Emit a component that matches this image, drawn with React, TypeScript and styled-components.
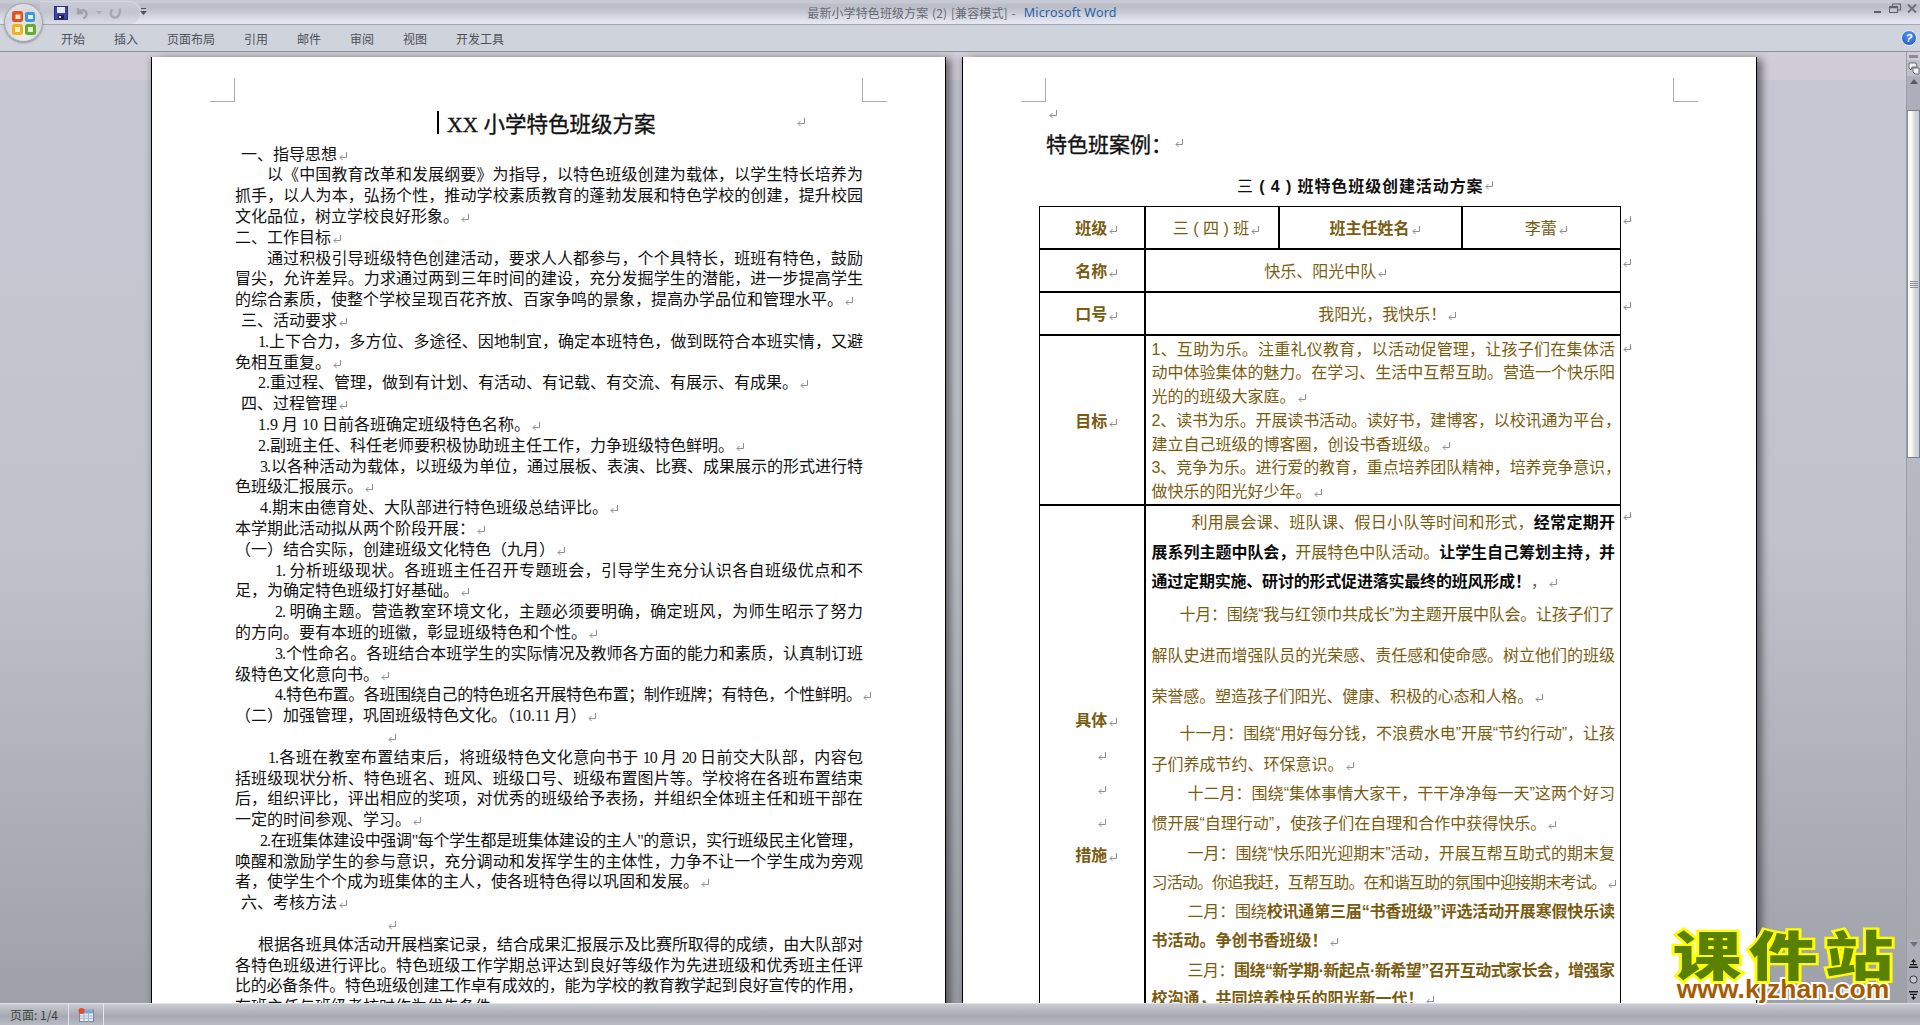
import React from 'react';
import styled, { createGlobalStyle } from 'styled-components';

const GlobalStyle = createGlobalStyle`
  html, body {
    margin: 0;
    padding: 0;
    height: 100%;
    overflow: hidden;
    background: #c5c8d2;
  }
  #root {
    height: 100%;
  }
`;

const Window = styled.div`
  position: relative;
  display: flex;
  flex-direction: column;
  width: 1920px;
  height: 1025px;
  overflow: hidden;
  font-family: "Noto Sans CJK SC", sans-serif;
`;

/* ---------- title bar + ribbon ---------- */

const TitleBar = styled.div`
  position: relative;
  display: flex;
  align-items: center;
  justify-content: center;
  flex: none;
  height: 24px;
  padding-left: 4px;
  border-bottom: 1px solid #a5a7af;
  background: linear-gradient(#c7cad4 0, #c7cad4 3px, #bcbfca 4px, #bcbfca 8px, #c6c9d3 12px, #d3d6e0 16px, #e3e6f0 22px);
`;

const DocName = styled.span`
  font-size: 12px;
  letter-spacing: 0.1px;
  word-spacing: 1px;
  color: #656971;
`;

const AppName = styled.span`
  margin-left: 8px;
  font-family: "Noto Sans", sans-serif;
  font-size: 12.5px;
  letter-spacing: 0.2px;
  color: #2a62a8;
`;

const QuickAccess = styled.div`
  position: absolute;
  left: 40px;
  top: 1px;
  display: flex;
  align-items: center;
  gap: 7px;
  width: 86px;
  height: 21px;
  padding-left: 14px;
  border: 1px solid #d6d9e2;
  border-left: none;
  border-radius: 0 12px 12px 0;
  background: linear-gradient(#c8cbd5, #c2c5cf 50%, #d8dbe5);
`;

const QuickMenu = styled.div`
  position: absolute;
  left: 140px;
  top: 8px;
  display: flex;
`;

const WindowButtons = styled.div`
  position: absolute;
  right: 2px;
  top: 3px;
  display: flex;
  align-items: center;
  gap: 5px;
`;

const OfficeButton = styled.div`
  position: absolute;
  left: 4px;
  top: 3px;
  z-index: 2;
  display: flex;
  align-items: center;
  justify-content: center;
  width: 37px;
  height: 37px;
  border: 1px solid #a3a6ad;
  border-radius: 50%;
  background: radial-gradient(circle at 50% 75%, #f4f5f8 0, #d3d5dc 55%, #e8e9ee 100%);
  box-shadow: 0 1px 2px rgba(60, 60, 70, 0.5);
`;

const TabBar = styled.div`
  position: relative;
  display: flex;
  align-items: center;
  flex: none;
  height: 26px;
  padding-left: 61px;
  gap: 29px;
  border-bottom: 1px solid #8e9096;
  background: #cfd3dc;
`;

const Tab = styled.span`
  font-size: 12px;
  color: #4c5058;
`;

const HelpButton = styled.div`
  position: absolute;
  right: 3px;
  top: 5px;
  display: flex;
  align-items: center;
  justify-content: center;
  width: 14px;
  height: 14px;
  border-radius: 50%;
  border: 1px solid #e8eefc;
  background: radial-gradient(circle at 50% 30%, #5c97ef, #1a50bb);
  color: #fff;
  font-family: "Liberation Sans", sans-serif;
  font-size: 11px;
  font-weight: 700;
  font-style: italic;
  line-height: 14px;
`;

/* ---------- document area ---------- */

const Workspace = styled.div`
  display: flex;
  flex: 1;
  min-height: 0;
`;

const Canvas = styled.div`
  flex: 1;
  display: flex;
  gap: 16px;
  padding: 5px 0 0 151px;
  overflow: hidden;
  background: linear-gradient(#d0cdd8 0, #d0cdd8 28px, #c5c8d2 28px, #c1c4cd 50%, #9ea1a8 100%);
`;

const Page = styled.div`
  position: relative;
  flex: none;
  box-sizing: border-box;
  width: 795px;
  height: 1400px;
  padding: 50px 83px 0;
  background: #fff;
  border-left: 1px solid #000;
  border-right: 1px solid #000;
  box-shadow: 7px 0 8px -2px rgba(50, 50, 55, 0.65), -3px 0 5px -1px rgba(70, 70, 80, 0.25);
`;

const CropMark = styled.div<{ $side: 'left' | 'right' }>`
  position: absolute;
  top: 21px;
  ${(p) => (p.$side === 'left' ? 'left: 58px; border-right: 1px solid #adadb5;' : 'right: 58px; border-left: 1px solid #adadb5;')}
  width: 24px;
  height: 23px;
  border-bottom: 1px solid #adadb5;
`;

const SerifText = styled.div`
  font-family: "Liberation Serif", "Noto Sans CJK SC", serif;
  font-size: 16px;
  color: #111;
`;

const HeadText = styled(SerifText)`
  margin-top: -4px;
`;

const DocTitle = styled.div`
  display: flex;
  align-items: center;
  height: 30px;
  margin-bottom: 7.6px;
  padding-left: 202px;
  font-size: 21.5px;
  -webkit-text-stroke: 0.35px #111;
  color: #111;
`;

const Caret = styled.span`
  flex: none;
  width: 2px;
  height: 23px;
  margin-right: 8px;
  background: #000;
`;

const DocTitleMark = styled.span`
  margin-left: 140px;
  display: flex;
`;

const Line = styled.div<{ $indent?: number; $full?: boolean; $ls?: number }>`
  height: 20.8px;
  line-height: 20.8px;
  padding-left: ${(p) => p.$indent ?? 0}px;
  white-space: nowrap;
  letter-spacing: ${(p) => (p.$ls !== undefined ? p.$ls : p.$full ? -1 : 0)}px;
  text-align: ${(p) => (p.$full ? 'justify' : 'left')};
  text-align-last: ${(p) => (p.$full ? 'justify' : 'left')};
`;

const MarkIcon = styled.svg`
  display: inline-block;
  width: 10px;
  height: 10px;
  margin-left: 1px;
  vertical-align: -1px;
`;

const Mark = () => (
  <MarkIcon viewBox="0 0 10 10" fill="none" stroke="#8f8f8f" strokeWidth="1">
    <path d="M8.5 1v5.5H2M4.5 4 2 6.5 4.5 9" />
  </MarkIcon>
);

/* ---------- right page ---------- */

const MarkLine = styled.div`
  height: 20px;
  line-height: 20px;
  padding-left: 1px;
`;

const CaseTitle = styled.div`
  display: flex;
  align-items: center;
  gap: 1px;
  height: 40px;
  font-size: 21px;
  -webkit-text-stroke: 0.35px #111;
  color: #111;
`;

const PlanTitle = styled.div`
  display: flex;
  align-items: center;
  height: 43px;
  padding-left: 191px;
  font-family: "Liberation Sans", "Noto Sans CJK SC", sans-serif;
  font-size: 16px;
  letter-spacing: 0.9px;
  white-space: pre;
  color: #111;
`;

const Plan = styled.table`
  width: 581px;
  margin-left: -7px;
  border-collapse: collapse;
  table-layout: fixed;
  font-family: "Liberation Sans", "Noto Sans CJK SC", sans-serif;
  font-size: 16px;
  color: #7a5c10;
`;

const Cell = styled.td<{ $pr?: number }>`
  position: relative;
  box-sizing: border-box;
  padding: 0 ${(p) => p.$pr ?? 0}px 0 10px;
  border: 2px solid #000;
  text-align: center;
  vertical-align: middle;
  &:first-child {
    border-left-width: 1px;
  }
  &:last-child {
    border-right-width: 1px;
  }
`;

const StackCell = styled(Cell)`
  vertical-align: top;
`;

const PlanRow = styled.tr<{ $h: number }>`
  height: ${(p) => p.$h}px;
  &:first-child td {
    border-top-width: 1px;
  }
`;

const Strong = styled.b`
  font-weight: 700;
`;

const RowMark = styled.span<{ $top: number }>`
  position: absolute;
  right: -12px;
  top: ${(p) => p.$top}px;
  display: flex;
`;

const TextCell = styled(Cell)`
  padding: 2px 6px 0 6px;
  text-align: left;
  vertical-align: top;
`;

const HeadStack = styled.div`
  display: flex;
  flex-direction: column;
  align-items: center;
  gap: 13px;
  padding-top: 205px;
  height: 900px;
`;

const StackLine = styled.div`
  height: 20.8px;
  line-height: 20.8px;
`;

const StackMark = styled(StackLine)`
  padding-left: 10px;
`;

const TableLine = styled.div<{ $indent?: number; $full?: boolean; $h: number; $ls?: number; $hang?: boolean }>`
  height: ${(p) => p.$h}px;
  line-height: ${(p) => p.$h}px;
  padding-left: ${(p) => p.$indent ?? 0}px;
  margin-right: ${(p) => (p.$hang ? -6 : 0)}px;
  white-space: nowrap;
  letter-spacing: ${(p) => (p.$ls !== undefined ? p.$ls : p.$full ? -1 : 0)}px;
  text-align: ${(p) => (p.$full ? 'justify' : 'left')};
  text-align-last: ${(p) => (p.$full ? 'justify' : 'left')};
`;

const BlackBold = styled.b`
  font-weight: 700;
  color: #0a0a0a;
`;

/* ---------- scrollbar ---------- */

const ScrollBar = styled.div`
  flex: none;
  display: flex;
  flex-direction: column;
  align-items: stretch;
  width: 14px;
  background: linear-gradient(#c5c8d2, #a4a7ae);
  border-left: 1px solid #9b9ea6;
  box-sizing: border-box;
`;

const SplitBox = styled.div`
  flex: none;
  height: 8px;
  display: flex;
  align-items: center;
  justify-content: center;
  background: #d0cdd8;
  &::after {
    content: '';
    width: 9px;
    height: 3px;
    background: #8a8c92;
  }
`;

const RulerBox = styled.div`
  flex: none;
  height: 16px;
  display: flex;
  align-items: center;
  justify-content: center;
  background: #bcc0ca;
`;

const ArrowBox = styled.div<{ $h: number }>`
  flex: none;
  height: ${(p) => p.$h}px;
  display: flex;
  justify-content: center;
  align-items: flex-start;
  padding-top: 3px;
  box-sizing: border-box;
  background: #acafb9;
`;

const Arrow = styled.div<{ $dir: 'up' | 'down' }>`
  width: 0;
  height: 0;
  border-left: 4px solid transparent;
  border-right: 4px solid transparent;
  ${(p) => (p.$dir === 'up' ? 'border-bottom: 5px solid #555b6b;' : 'border-top: 5px solid #6b7080;')}
`;

const Thumb = styled.div`
  flex: none;
  height: 348px;
  display: flex;
  flex-direction: column;
  align-items: center;
  justify-content: center;
  gap: 1px;
  box-sizing: border-box;
  border: 1px solid #7c7f88;
  border-left: 1px solid #8a8d95;
  background: linear-gradient(90deg, #fbfaf3 0, #fdfbf2 30%, #d6d8e0 60%, #c9ccd6 100%);
`;

const Grip = styled.span`
  width: 8px;
  height: 1px;
  background: #8b8e96;
`;

const TrackFill = styled.div`
  flex: 1;
`;

const BrowseBox = styled.div`
  flex: none;
  height: 16px;
  display: flex;
  align-items: center;
  justify-content: center;
  background: #abaeb6;
`;

/* ---------- status bar ---------- */

const StatusBar = styled.div`
  flex: none;
  display: flex;
  align-items: stretch;
  box-sizing: border-box;
  height: 22px;
  border-top: 1px solid #dfe1e6;
  background: linear-gradient(#c9cbd2 0, #b0b3bb 40%, #a6a9b1 60%, #b8bbc3 100%);
  position: relative;
  z-index: 1;
`;

const StatusItem = styled.div<{ $w: number }>`
  display: flex;
  align-items: center;
  justify-content: center;
  width: ${(p) => p.$w}px;
  border-right: 1px solid #e4e5ea;
  font-size: 12px;
  color: #3f4248;
`;

/* ---------- watermark logo ---------- */

const Watermark = styled.div`
  position: absolute;
  right: 21px;
  bottom: 24px;
  z-index: 3;
  display: flex;
  flex-direction: column;
  align-items: center;
  width: 232px;
`;

const WatermarkCn = styled.div`
  font-family: "Noto Sans CJK SC", sans-serif;
  font-size: 69px;
  font-weight: 900;
  line-height: 56px;
  height: 52px;
  letter-spacing: 7px;
  margin-right: -7px;
  color: #5a8000;
  -webkit-text-stroke: 6px #ffff00;
  paint-order: stroke fill;
  transform: scaleY(0.78);
  white-space: nowrap;
`;

const WatermarkUrl = styled.div`
  font-family: "Liberation Sans", sans-serif;
  font-size: 26.5px;
  font-weight: 700;
  line-height: 24px;
  color: #a85a00;
  -webkit-text-stroke: 4px #fff;
  paint-order: stroke fill;
`;

/* ---------- drawings ---------- */

const OfficeLogo = () => (
  <svg width="28" height="28" viewBox="0 0 28 28">
    <rect x="2" y="2" width="11" height="11" rx="2.5" fill="#e0531c" />
    <rect x="5.5" y="5.5" width="5" height="4.5" fill="#f8e9c8" />
    <rect x="15" y="3" width="10" height="10" rx="2" fill="#3f97d9" />
    <rect x="18" y="6" width="5" height="4" fill="#e6f2fb" />
    <rect x="2" y="15" width="11" height="11" rx="2.5" fill="#f2b01e" />
    <rect x="5" y="18" width="5" height="5" fill="#fdf3c4" />
    <rect x="15" y="15" width="11" height="11" rx="2.5" fill="#63ad2e" />
    <rect x="18" y="18" width="5" height="5" fill="#e8f5d5" />
    <circle cx="14" cy="14" r="2" fill="#dfe4ea" />
  </svg>
);

const SaveIcon = () => (
  <svg width="14" height="14" viewBox="0 0 14 14">
    <rect x="0.5" y="0.5" width="13" height="13" fill="#3b45a8" stroke="#2a2f70" />
    <rect x="3" y="1" width="8" height="6" fill="#e8e9f4" />
    <rect x="4" y="9" width="6" height="4" fill="#20233a" />
    <rect x="5" y="10" width="2" height="2" fill="#d7d9e0" />
  </svg>
);

const UndoIcon = () => (
  <svg width="14" height="14" viewBox="0 0 14 14" fill="none" stroke="#a0a3ad" strokeWidth="2.4">
    <path d="M3 2v5h5M3.5 6.5C6 3 11 3.5 11.5 7.5c.3 2.5-1.5 4-3 5" />
  </svg>
);

const RedoIcon = () => (
  <svg width="13" height="14" viewBox="0 0 13 14" fill="none" stroke="#a5a8b2" strokeWidth="2.4">
    <path d="M11 2.5v4.5M3.5 3.5C.8 5.5 1 11 5.5 11.5c3 .2 5-1.5 5-5" />
  </svg>
);

const SmallArrowDown = () => (
  <svg width="6" height="4" viewBox="0 0 6 4">
    <path d="M0 0h6L3 3.5z" fill="#a9acb6" />
  </svg>
);

const MenuArrow = () => (
  <svg width="7" height="7" viewBox="0 0 7 7">
    <path d="M1 0h5v1H1zM0 3h7L3.5 7z" fill="#4e525c" />
  </svg>
);

const MinimizeIcon = () => (
  <svg width="12" height="12" viewBox="0 0 12 12">
    <rect x="2" y="8" width="7" height="2" fill="#5d6068" />
  </svg>
);

const RestoreIcon = () => (
  <svg width="12" height="12" viewBox="0 0 12 12" fill="none" stroke="#5d6068">
    <rect x="3.5" y="1" width="8" height="6" />
    <rect x="0.5" y="3.5" width="8" height="6" fill="#c4c7d1" />
    <path d="M0.5 4.5h8" strokeWidth="1.5" />
  </svg>
);

const CloseIcon = () => (
  <svg width="12" height="12" viewBox="0 0 12 12" stroke="#6c7079" strokeWidth="2">
    <path d="M2 1.5l8 8M10 1.5l-8 8" />
  </svg>
);

const RulerIcon = () => (
  <svg width="12" height="13" viewBox="0 0 12 13" fill="#f2f3f6" stroke="#50535c" strokeWidth="0.8">
    <path d="M1 1h7l1 4h-5l-1 3-2-2z" />
    <path d="M5 6h6v6H7l-2-2z" />
  </svg>
);

const BrowseUp = () => (
  <svg width="9" height="9" viewBox="0 0 9 9" fill="#1a1a1a">
    <path d="M4.5 0 7 3H2zM4 3h1v2H4zM1 5h7v1.2H1zM0 7.5h9V9H0z" />
  </svg>
);

const BrowseDot = () => (
  <svg width="9" height="9" viewBox="0 0 9 9">
    <circle cx="4.5" cy="4.5" r="3.6" fill="#c6c8ce" stroke="#2b2b2e" strokeWidth="0.9" />
  </svg>
);

const BrowseDown = () => (
  <svg width="9" height="9" viewBox="0 0 9 9" fill="#1a1a1a">
    <path d="M0 0h9v1.5H0zM1 2.8h7V4H1zM4 4h1v2H4zM4.5 9 2 6h5z" />
  </svg>
);

const MacroIcon = () => (
  <svg width="16" height="14" viewBox="0 0 16 14">
    <rect x="1.5" y="2" width="14" height="11.5" fill="#e8ecf5" stroke="#7d8aa3" />
    <rect x="2" y="2.5" width="13" height="3" fill="#7da2d6" />
    <path d="M2 8h13M2 10.5h13M6 5.5v8M10.5 5.5v8" stroke="#a9b4c8" />
    <circle cx="3.5" cy="3" r="3" fill="#e8482e" />
  </svg>
);

/* ---------- content ---------- */

type Row = { t: string; i?: number; f?: boolean; m?: boolean; ls?: number; hang?: boolean };

const leftRows: Row[] = [
  { t: '一、指导思想', i: 6, m: true },
  { t: '以《中国教育改革和发展纲要》为指导，以特色班级创建为载体，以学生特长培养为', i: 32, f: true },
  { t: '抓手，以人为本，弘扬个性，推动学校素质教育的蓬勃发展和特色学校的创建，提升校园', f: true },
  { t: '文化品位，树立学校良好形象。', m: true },
  { t: '二、工作目标', m: true },
  { t: '通过积极引导班级特色创建活动，要求人人都参与，个个具特长，班班有特色，鼓励', i: 32, f: true },
  { t: '冒尖，允许差异。力求通过两到三年时间的建设，充分发掘学生的潜能，进一步提高学生', f: true },
  { t: '的综合素质，使整个学校呈现百花齐放、百家争鸣的景象，提高办学品位和管理水平。', m: true },
  { t: '三、活动要求', i: 6, m: true },
  { t: '1.上下合力，多方位、多途径、因地制宜，确定本班特色，做到既符合本班实情，又避', i: 23, f: true },
  { t: '免相互重复。', m: true },
  { t: '2.重过程、管理，做到有计划、有活动、有记载、有交流、有展示、有成果。', i: 23, m: true },
  { t: '四、过程管理', i: 6, m: true },
  { t: '1.9 月 10 日前各班确定班级特色名称。', i: 23, m: true },
  { t: '2.副班主任、科任老师要积极协助班主任工作，力争班级特色鲜明。', i: 23, m: true },
  { t: '3.以各种活动为载体，以班级为单位，通过展板、表演、比赛、成果展示的形式进行特', i: 25, f: true },
  { t: '色班级汇报展示。', m: true },
  { t: '4.期末由德育处、大队部进行特色班级总结评比。', i: 25, m: true },
  { t: '本学期此活动拟从两个阶段开展：', m: true },
  { t: '（一）结合实际，创建班级文化特色（九月）', m: true },
  { t: '1. 分析班级现状。各班班主任召开专题班会，引导学生充分认识各自班级优点和不', i: 40, f: true },
  { t: '足，为确定特色班级打好基础。', m: true },
  { t: '2. 明确主题。营造教室环境文化，主题必须要明确，确定班风，为师生昭示了努力', i: 40, f: true },
  { t: '的方向。要有本班的班徽，彰显班级特色和个性。', m: true },
  { t: '3.个性命名。各班结合本班学生的实际情况及教师各方面的能力和素质，认真制订班', i: 40, f: true },
  { t: '级特色文化意向书。', m: true },
  { t: '4.特色布置。各班围绕自己的特色班名开展特色布置；制作班牌；有特色，个性鲜明。', i: 40, m: true, ls: -0.45 },
  { t: '（二）加强管理，巩固班级特色文化。（10.11 月）', m: true },
  { t: '', i: 151, m: true },
  { t: '1.各班在教室布置结束后，将班级特色文化意向书于 10 月 20 日前交大队部，内容包', i: 33, f: true },
  { t: '括班级现状分析、特色班名、班风、班级口号、班级布置图片等。学校将在各班布置结束', f: true },
  { t: '后，组织评比，评出相应的奖项，对优秀的班级给予表扬，并组织全体班主任和班干部在', f: true },
  { t: '一定的时间参观、学习。', m: true },
  { t: '2.在班集体建设中强调"每个学生都是班集体建设的主人"的意识，实行班级民主化管理，', i: 25, f: true },
  { t: '唤醒和激励学生的参与意识，充分调动和发挥学生的主体性，力争不让一个学生成为旁观', f: true },
  { t: '者，使学生个个成为班集体的主人，使各班特色得以巩固和发展。', m: true },
  { t: '六、考核方法', i: 6, m: true },
  { t: '', i: 151, m: true },
  { t: '根据各班具体活动开展档案记录，结合成果汇报展示及比赛所取得的成绩，由大队部对', i: 23, f: true },
  { t: '各特色班级进行评比。特色班级工作学期总评达到良好等级作为先进班级和优秀班主任评', f: true },
  { t: '比的必备条件。特色班级创建工作卓有成效的，能为学校的教育教学起到良好宣传的作用，', f: true },
  { t: '在班主任与班级考核时作为优先条件。' },
];

const goalRows: Row[] = [
  { t: '1、互助为乐。注重礼仪教育，以活动促管理，让孩子们在集体活', f: true },
  { t: '动中体验集体的魅力。在学习、生活中互帮互助。营造一个快乐阳', f: true },
  { t: '光的的班级大家庭。', m: true },
  { t: '2、读书为乐。开展读书活动。读好书，建博客，以校讯通为平台，', f: true, hang: true },
  { t: '建立自己班级的博客圈，创设书香班级。', m: true },
  { t: '3、竞争为乐。进行爱的教育，重点培养团队精神，培养竞争意识，', f: true, hang: true },
  { t: '做快乐的阳光好少年。', m: true },
];

const tabs = ['开始', '插入', '页面布局', '引用', '邮件', '审阅', '视图', '开发工具'];

export default function App() {
  return (
    <Window lang="zh-CN">
      <GlobalStyle />

      <OfficeButton>
        <OfficeLogo />
      </OfficeButton>

      <TitleBar>
        <QuickAccess>
          <SaveIcon />
          <UndoIcon />
          <SmallArrowDown />
          <RedoIcon />
        </QuickAccess>
        <QuickMenu>
          <MenuArrow />
        </QuickMenu>
        <DocName>最新小学特色班级方案 (2) [兼容模式] -</DocName>
        <AppName>Microsoft Word</AppName>
        <WindowButtons>
          <MinimizeIcon />
          <RestoreIcon />
          <CloseIcon />
        </WindowButtons>
      </TitleBar>

      <TabBar>
        {tabs.map((tab) => (
          <Tab key={tab}>{tab}</Tab>
        ))}
        <HelpButton>?</HelpButton>
      </TabBar>

      <Workspace>
        <Canvas>
          <Page>
            <CropMark $side="left" />
            <CropMark $side="right" />
            <SerifText>
              <DocTitle>
                <Caret />
                XX 小学特色班级方案
                <DocTitleMark>
                  <Mark />
                </DocTitleMark>
              </DocTitle>
              {leftRows.map((row, i) => (
                <Line key={i} $indent={row.i} $full={row.f} $ls={row.ls}>
                  {row.t}
                  {row.m && <Mark />}
                </Line>
              ))}
            </SerifText>
          </Page>

          <Page>
            <CropMark $side="left" />
            <CropMark $side="right" />
            <HeadText>
              <MarkLine>
                <Mark />
              </MarkLine>
              <CaseTitle>
                特色班案例：
                <Mark />
              </CaseTitle>
              <PlanTitle>
                三<Strong> ( 4 ) 班特色班级创建活动方案</Strong>
                <Mark />
              </PlanTitle>
            </HeadText>

            <Plan>
              <colgroup>
                <col style={{ width: 105 }} />
                <col style={{ width: 134 }} />
                <col style={{ width: 183 }} />
                <col style={{ width: 159 }} />
              </colgroup>
              <tbody>
                <PlanRow $h={42}>
                  <Cell>
                    <Strong>班级</Strong>
                    <Mark />
                  </Cell>
                  <Cell>
                    三 ( 四 ) 班
                    <Mark />
                  </Cell>
                  <Cell>
                    <Strong>班主任姓名</Strong>
                    <Mark />
                  </Cell>
                  <Cell>
                    李蕾
                    <Mark />
                    <RowMark $top={8}>
                      <Mark />
                    </RowMark>
                  </Cell>
                </PlanRow>
                <PlanRow $h={43}>
                  <Cell>
                    <Strong>名称</Strong>
                    <Mark />
                  </Cell>
                  <Cell colSpan={3} $pr={124}>
                    快乐、阳光中队
                    <Mark />
                    <RowMark $top={8}>
                      <Mark />
                    </RowMark>
                  </Cell>
                </PlanRow>
                <PlanRow $h={43}>
                  <Cell>
                    <Strong>口号</Strong>
                    <Mark />
                  </Cell>
                  <Cell colSpan={3}>
                    我阳光，我快乐！
                    <Mark />
                    <RowMark $top={8}>
                      <Mark />
                    </RowMark>
                  </Cell>
                </PlanRow>
                <PlanRow $h={169}>
                  <Cell>
                    <Strong>目标</Strong>
                    <Mark />
                  </Cell>
                  <TextCell colSpan={3}>
                    {goalRows.map((row, i) => (
                      <TableLine key={i} $h={23.8} $full={row.f} $hang={row.hang}>
                        {row.t}
                        {row.m && <Mark />}
                      </TableLine>
                    ))}
                    <RowMark $top={7}>
                      <Mark />
                    </RowMark>
                  </TextCell>
                </PlanRow>
                <PlanRow $h={900}>
                  <StackCell>
                    <HeadStack>
                      <StackLine>
                        <Strong>具体</Strong>
                        <Mark />
                      </StackLine>
                      <StackMark>
                        <Mark />
                      </StackMark>
                      <StackMark>
                        <Mark />
                      </StackMark>
                      <StackMark>
                        <Mark />
                      </StackMark>
                      <StackLine>
                        <Strong>措施</Strong>
                        <Mark />
                      </StackLine>
                    </HeadStack>
                  </StackCell>
                  <TextCell colSpan={3}>
                    <TableLine $h={30} $indent={40} $full>
                      利用晨会课、班队课、假日小队等时间和形式，
                      <BlackBold>经常定期开</BlackBold>
                    </TableLine>
                    <TableLine $h={30} $full>
                      <BlackBold>展系列主题中队会，</BlackBold>开展特色中队活动。
                      <BlackBold>让学生自己筹划主持，并</BlackBold>
                    </TableLine>
                    <TableLine $h={28} $ls={-0.2}>
                      <BlackBold>通过定期实施、研讨的形式促进落实最终的班风形成！</BlackBold>，
                      <Mark />
                    </TableLine>
                    <TableLine $h={37.5} $indent={28} $full>
                      十月：围绕“我与红领巾共成长”为主题开展中队会。让孩子们了
                    </TableLine>
                    <TableLine $h={43} $full>
                      解队史进而增强队员的光荣感、责任感和使命感。树立他们的班级
                    </TableLine>
                    <TableLine $h={40} $ls={-0.1}>
                      荣誉感。塑造孩子们阳光、健康、积极的心态和人格。
                      <Mark />
                    </TableLine>
                    <TableLine $h={33.5} $indent={28} $full>
                      十一月：围绕“用好每分钱，不浪费水电”开展“节约行动”，让孩
                    </TableLine>
                    <TableLine $h={29}>
                      子们养成节约、环保意识。
                      <Mark />
                    </TableLine>
                    <TableLine $h={30} $indent={36} $full>
                      十二月：围绕“集体事情大家干，干干净净每一天”这两个好习
                    </TableLine>
                    <TableLine $h={29.5}>
                      惯开展“自理行动”，使孩子们在自理和合作中获得快乐。
                      <Mark />
                    </TableLine>
                    <TableLine $h={29} $indent={36} $full>
                      一月：围绕“快乐阳光迎期末”活动，开展互帮互助式的期末复
                    </TableLine>
                    <TableLine $h={29.5} $ls={-0.85}>
                      习活动。你追我赶，互帮互助。在和谐互助的氛围中迎接期末考试。
                      <Mark />
                    </TableLine>
                    <TableLine $h={29} $indent={36} $full>
                      二月：围绕<Strong>校讯通第三届“书香班级”评选活动开展寒假快乐读</Strong>
                    </TableLine>
                    <TableLine $h={29.5}>
                      <Strong>书活动。争创书香班级！</Strong>
                      <Mark />
                    </TableLine>
                    <TableLine $h={29} $indent={36} $full>
                      三月：<Strong>围绕“新学期·新起点·新希望”召开互动式家长会，增强家</Strong>
                    </TableLine>
                    <TableLine $h={28}>
                      <Strong>校沟通，共同培养快乐的阳光新一代！</Strong>
                      <Mark />
                    </TableLine>
                    <RowMark $top={5}>
                      <Mark />
                    </RowMark>
                  </TextCell>
                </PlanRow>
              </tbody>
            </Plan>
          </Page>
        </Canvas>

        <ScrollBar>
          <SplitBox />
          <RulerBox>
            <RulerIcon />
          </RulerBox>
          <ArrowBox $h={34}>
            <Arrow $dir="up" />
          </ArrowBox>
          <Thumb>
            <Grip />
            <Grip />
            <Grip />
            <Grip />
          </Thumb>
          <TrackFill />
          <ArrowBox $h={16}>
            <Arrow $dir="down" />
          </ArrowBox>
          <BrowseBox>
            <BrowseUp />
          </BrowseBox>
          <BrowseBox>
            <BrowseDot />
          </BrowseBox>
          <BrowseBox>
            <BrowseDown />
          </BrowseBox>
        </ScrollBar>
      </Workspace>

      <StatusBar>
        <StatusItem $w={68}>页面: 1/4</StatusItem>
        <StatusItem $w={34}>
          <MacroIcon />
        </StatusItem>
      </StatusBar>

      <Watermark>
        <WatermarkCn>课件站</WatermarkCn>
        <WatermarkUrl>www.kjzhan.com</WatermarkUrl>
      </Watermark>
    </Window>
  );
}
